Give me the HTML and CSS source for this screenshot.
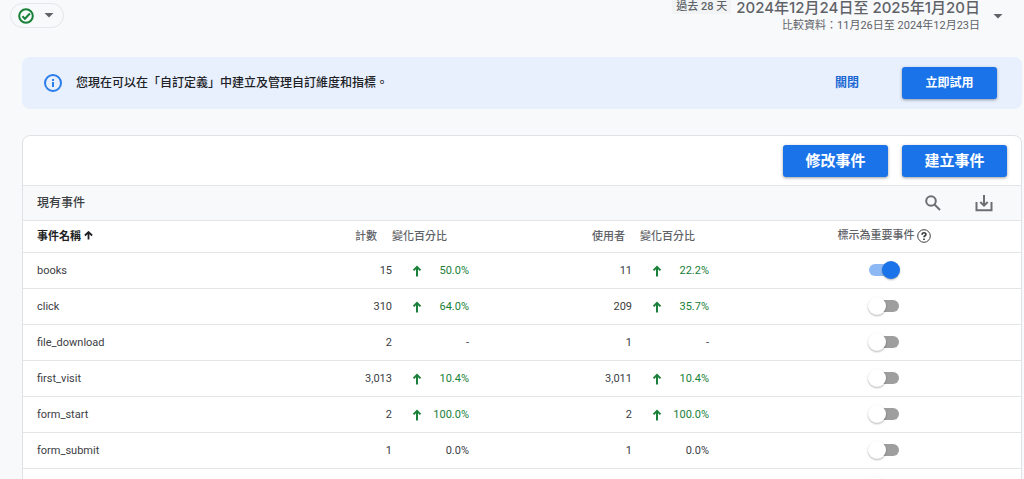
FILE: index.html
```html
<!DOCTYPE html>
<html lang="zh-Hant">
<head>
<meta charset="utf-8">
<meta name="viewport" content="width=device-width, initial-scale=1">
<title>事件</title>
<link rel="stylesheet" href="styles.css">
</head>
<body>
<svg class="sprite" aria-hidden="true">
  <symbol id="up" viewBox="0 0 10 12"><path d="M5 11.5V2M1.5 5.4L5 1.9L8.5 5.4" fill="none" stroke="currentColor" stroke-width="2"/></symbol>
  <symbol id="caret" viewBox="0 0 10 5"><path d="M0.5 0h9L5 4.5z" fill="currentColor"/></symbol>
</svg>
<header class="topbar">
  <button class="status" type="button" aria-label="狀態">
    <svg class="status-check" viewBox="0 0 16 16"><circle cx="8" cy="8" r="6.8"/><path d="M4.4 8.2l2.5 2.5 5-5.2"/></svg>
    <svg class="caret"><use href="#caret"/></svg>
  </button>
  <button class="dates" type="button">
    <span class="preset">過去 28 天</span>
    <span class="ranges">
      <span class="range">2024年12月24日至 2025年1月20日</span>
      <span class="compare">比較資料：11月26日至 2024年12月23日</span>
    </span>
    <svg class="caret"><use href="#caret"/></svg>
  </button>
</header>
<main class="content">
  <section class="banner">
    <svg class="info" viewBox="0 0 18 18"><circle cx="9" cy="9" r="8"/><path d="M9 8v5M9 5v2"/></svg>
    <p class="banner-text">您現在可以在「自訂定義」中建立及管理自訂維度和指標。</p>
    <button class="link-button" type="button">關閉</button>
    <button class="primary" type="button">立即試用</button>
  </section>
  <section class="card">
    <div class="actions">
      <button class="primary large" type="button">修改事件</button>
      <button class="primary large" type="button">建立事件</button>
    </div>
    <div class="toolbar">
      <h2 class="toolbar-title">現有事件</h2>
      <button class="icon-button" type="button" aria-label="搜尋"><svg class="search-icon" viewBox="0 0 16 16"><circle cx="6" cy="6" r="4.8"/><path d="M9.5 9.5l5.5 5.5"/></svg></button>
      <button class="icon-button" type="button" aria-label="下載"><svg class="download-icon" viewBox="0 0 18 18"><path d="M1.5 8v8.2h15V8M9 1v10.5M5.3 8L9 11.7 12.7 8"/></svg></button>
    </div>
    <table class="events">
      <colgroup><col><col class="col-count"><col class="col-change"><col class="col-users"><col class="col-change"><col class="col-key"></colgroup>
      <thead>
        <tr>
          <th class="name" scope="col">事件名稱 <svg class="sort" viewBox="0 0 10 10"><path d="M5 9.5V1.5M1 5L5 1.2 9 5"/></svg></th>
          <th class="number head-count" scope="col">計數</th>
          <th class="head-change" scope="col">變化百分比</th>
          <th class="number head-users" scope="col">使用者</th>
          <th class="head-change indent" scope="col">變化百分比</th>
          <th class="key" scope="col"><span class="key-label">標示為重要事件 <svg class="help" viewBox="0 0 14 14"><circle cx="7" cy="7" r="6.3"/><path class="help-mark" d="M5.1 5.7c0-2.6 3.8-2.5 3.8-.2 0 1.2-1.9 1.4-1.9 2.8M7 9.4v1.5"/></svg></span></th>
        </tr>
      </thead>
      <tbody>
        <tr><td class="name">books</td><td class="number">15</td><td><div class="change up"><svg class="arrow"><use href="#up"/></svg>50.0%</div></td><td class="number">11</td><td><div class="change up"><svg class="arrow"><use href="#up"/></svg>22.2%</div></td><td class="key"><input class="switch" type="checkbox" role="switch" aria-label="books" checked></td></tr>
        <tr><td class="name">click</td><td class="number">310</td><td><div class="change up"><svg class="arrow"><use href="#up"/></svg>64.0%</div></td><td class="number">209</td><td><div class="change up"><svg class="arrow"><use href="#up"/></svg>35.7%</div></td><td class="key"><input class="switch" type="checkbox" role="switch" aria-label="click"></td></tr>
        <tr><td class="name">file_download</td><td class="number">2</td><td><div class="change">-</div></td><td class="number">1</td><td><div class="change">-</div></td><td class="key"><input class="switch" type="checkbox" role="switch" aria-label="file_download"></td></tr>
        <tr><td class="name">first_visit</td><td class="number">3,013</td><td><div class="change up"><svg class="arrow"><use href="#up"/></svg>10.4%</div></td><td class="number">3,011</td><td><div class="change up"><svg class="arrow"><use href="#up"/></svg>10.4%</div></td><td class="key"><input class="switch" type="checkbox" role="switch" aria-label="first_visit"></td></tr>
        <tr><td class="name">form_start</td><td class="number">2</td><td><div class="change up"><svg class="arrow"><use href="#up"/></svg>100.0%</div></td><td class="number">2</td><td><div class="change up"><svg class="arrow"><use href="#up"/></svg>100.0%</div></td><td class="key"><input class="switch" type="checkbox" role="switch" aria-label="form_start"></td></tr>
        <tr><td class="name">form_submit</td><td class="number">1</td><td><div class="change">0.0%</div></td><td class="number">1</td><td><div class="change">0.0%</div></td><td class="key"><input class="switch" type="checkbox" role="switch" aria-label="form_submit"></td></tr>
        <tr><td></td><td></td><td></td><td></td><td></td><td class="key"><input class="switch" type="checkbox" role="switch" aria-label="事件"></td></tr>
      </tbody>
    </table>
  </section>
</main>
</body>
</html>
```
FILE: styles.css
```css
* { box-sizing: border-box; }
body {
  margin: 0;
  height: 100vh;
  overflow: hidden;
  background: #f8f9fb;
  color: #3c4043;
  font: 11px/16px Roboto, "Noto Sans CJK TC", sans-serif;
}
button { font: inherit; border: 0; background: none; padding: 0; cursor: pointer; }
svg { display: block; flex: none; }
.sprite { display: none; }

.topbar {
  display: flex;
  justify-content: space-between;
  align-items: flex-start;
  height: 57px;
  padding: 0 21px 0 10px;
}
.status {
  display: flex;
  align-items: center;
  justify-content: space-between;
  width: 54px;
  height: 25px;
  margin-top: 3px;
  padding: 0 9px 0 7px;
  border: 1px solid #e3e5e8;
  border-radius: 13px;
}
.status-check { width: 16px; height: 16px; fill: none; stroke: #188038; stroke-width: 2; }
.caret { width: 10px; height: 5px; color: #5f6368; }
.dates { display: flex; align-items: flex-start; color: #5f6368; }
.dates .caret { margin: 14px 0 0 13px; }
.preset {
  margin-right: 5px;
  padding: 0 4px;
  background: #f1f3f4;
  font-size: 11px;
  line-height: 14px;
  font-weight: 500;
}
.ranges { display: flex; flex-direction: column; align-items: flex-end; }
.range {
  font-family: Inter, "Noto Sans CJK TC", sans-serif;
  font-size: 15px;
  line-height: 16px;
  font-weight: 500;
}
.compare { margin-top: 2px; }

.content { padding: 0 2px 0 22px; }
.banner {
  display: flex;
  align-items: center;
  height: 52px;
  padding: 0 25px 0 22px;
  border-radius: 8px;
  background: #e8f0fe;
  color: #202124;
  font-size: 12px;
}
.info { width: 18px; height: 18px; margin-right: 14px; fill: none; stroke: #2b7de9; stroke-width: 2; }
.banner-text { flex: 1; margin: 0; font-weight: 500; }
.link-button { margin-right: 43px; color: #1967d2; font-weight: 700; }
.primary {
  min-width: 95px;
  height: 32px;
  padding: 0 20px;
  border-radius: 3px;
  background: #1a73e8;
  color: #fff;
  font-weight: 700;
  box-shadow: 0 1px 3px rgba(60, 64, 67, .5);
}

.card {
  margin-top: 26px;
  border: 1px solid #dfe1e5;
  border-radius: 8px;
  background: #fff;
}
.actions { display: flex; justify-content: flex-end; align-items: center; gap: 14px; height: 49px; padding-right: 14px; }
.primary.large { min-width: 105px; font-size: 15px; }
.toolbar {
  display: flex;
  align-items: center;
  height: 36px;
  padding: 0 28px 0 14px;
  border-top: 1px solid #e3e5e8;
  border-bottom: 1px solid #e3e5e8;
  background: #f8f9fb;
}
.toolbar-title { flex: 1; margin: 0; font-size: 12px; font-weight: 500; }
.icon-button { margin-left: 34px; color: #6b6f73; }
.icon-button svg { fill: none; stroke: currentColor; stroke-width: 2; }
.search-icon { width: 16px; height: 16px; }
.download-icon { width: 18px; height: 18px; }

.events { width: 100%; border-collapse: collapse; table-layout: fixed; }
.events th, .events td { padding: 0; border-bottom: 1px solid #e3e5e8; }
.events th { height: 31px; padding-top: 2px; text-align: left; color: #5f6368; font-weight: 500; }
.events td { height: 36px; padding-top: 1px; }
.col-count { width: 92px; }
.col-change { width: 77px; }
.col-users { width: 163px; }
.col-key { width: 312px; }
.events .name { padding-left: 14px; }
.events th.name { color: #202124; font-weight: 700; }
.events .number { text-align: right; }
.events .head-count { padding-right: 15px; }
.events .head-users { padding-right: 7px; }
.events .indent { padding-left: 8px; }
.sort { display: inline-block; width: 9px; height: 9px; fill: none; stroke: currentColor; stroke-width: 2; }
.change { display: flex; justify-content: flex-end; padding-left: 20px; }
.change.up { justify-content: space-between; align-items: center; color: #188038; }
.arrow { width: 10px; height: 12px; }
.events .key { padding-top: 0; padding-left: 38px; text-align: center; }
.key-label { display: inline-flex; align-items: center; gap: 2px; }
.help { width: 14px; height: 14px; fill: none; stroke: #3c4043; stroke-width: 1; }
.help-mark { stroke-width: 1.7; }

.switch {
  appearance: none;
  position: relative;
  display: inline-block;
  vertical-align: middle;
  width: 30px;
  height: 12px;
  margin: 0;
  border-radius: 6px;
  background: #9e9e9e;
}
.switch::before {
  content: "";
  position: absolute;
  top: -3px;
  left: -1px;
  width: 18px;
  height: 18px;
  border-radius: 50%;
  background: #fff;
  box-shadow: 0 1px 2px rgba(0, 0, 0, .3);
}
.switch:checked { background: #8cb9f4; }
.switch:checked::before { left: 13px; background: #1a73e8; }
```
